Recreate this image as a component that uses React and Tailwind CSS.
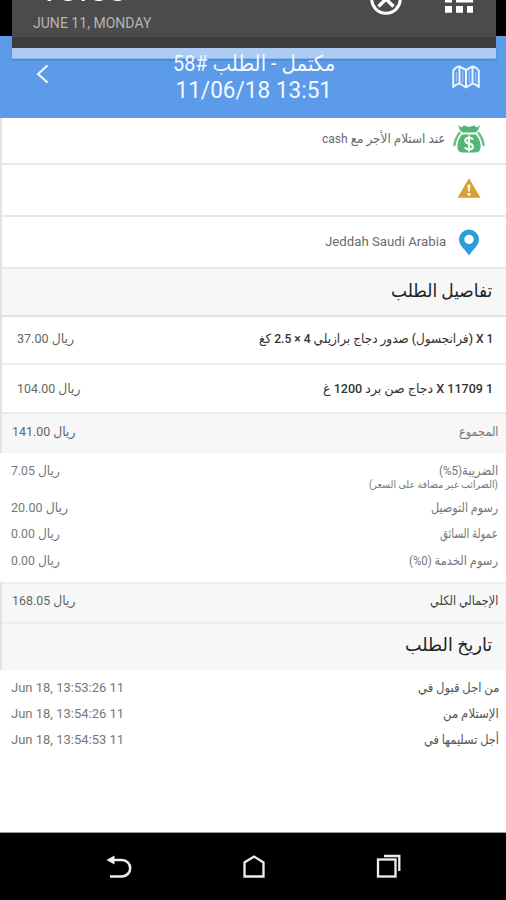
import { useLayoutEffect, useRef, useState } from 'react';

const FONT = "font-[Roboto,'DejaVu_Sans',sans-serif]";

// One line of text stretched or squeezed horizontally to a given width.
function Fit({ width, from = 'right', dir = 'rtl', className = '', children }) {
  const ref = useRef(null);
  const [scale, setScale] = useState(1);
  useLayoutEffect(() => {
    const measure = () => {
      if (ref.current && ref.current.offsetWidth) setScale(width / ref.current.offsetWidth);
    };
    measure();
    document.fonts?.ready.then(measure);
  }, [width]);
  const origin = from === 'right' ? 'origin-right' : from === 'left' ? 'origin-left' : 'origin-center';
  return (
    <span
      ref={ref}
      dir={dir}
      className={`inline-block whitespace-nowrap ${origin} ${className}`}
      style={{ transform: `scaleX(${scale})` }}
    >
      {children}
    </span>
  );
}

function MapIcon() {
  return (
    <svg width="28" height="24" viewBox="0 0 28 24" fill="none" stroke="#e8f4ff" strokeWidth="2" strokeLinejoin="round">
      <path d="M1.2 5.5 Q4.5 1.5 7.5 1.500 L14 5 L20.5 1.500 Q24 2 26.8 5.5 V22 Q24 19 20.5 18.500 L14 22.5 L7.5 18.500 Q4 19 1.2 22 Z" />
      <path d="M7.5 2 V19 M14 5 V22 M20.5 2 V19" />
      <path d="M4.3 7 V17 M10.8 6 V18 M17.3 6 V18 M23.7 7 V17" strokeWidth="1" opacity=".6" />
    </svg>
  );
}

function MoneyIcon() {
  return (
    <svg width="32" height="30" viewBox="0 0 32 30">
      <path d="M5 1 L8 3.5 L11 1.5 L16 3 L21 1.5 L24 3.5 L27 1 L25 6.5 L22.5 8.5 H9.5 L7 6.5 Z" fill="#55b478" />
      <path d="M9 10.5 H23 Q28.3 17 27.5 24 Q27 28.5 22 28.5 H10 Q5 28.5 4.5 24 Q3.700 17 9 10.500 Z" fill="#55b478" />
      <path d="M6.500 9 Q2 15 1.500 21" fill="none" stroke="#6dbd89" strokeWidth="2.500" strokeLinecap="round" />
      <path d="M25.500 9 Q30 15 30.500 21" fill="none" stroke="#6dbd89" strokeWidth="2.500" strokeLinecap="round" />
      <path d="M20 15.500 Q18.500 13.800 16 13.800 Q12.300 13.800 12.300 16.600 Q12.300 19 16 19.600 Q20 20.300 20 22.700 Q20 25.300 16 25.300 Q13.300 25.300 11.800 23.500 M16 11.500 V27.500" fill="none" stroke="#f0fff5" strokeWidth="2.100" />
    </svg>
  );
}

function WarnIcon() {
  return (
    <svg width="24" height="20" viewBox="0 0 24 20">
      <path d="M12 .3 L23.500 19.800 H.5 Z" fill="#d9a034" />
      <path d="M10.600 6.500 H13.400 L12.900 13.500 H11.100 Z" fill="#fffbe8" />
      <circle cx="12" cy="16.300" r="1.500" fill="#fffbe8" />
    </svg>
  );
}

function PinIcon() {
  return (
    <svg width="22" height="27" viewBox="0 0 22 27">
      <path fillRule="evenodd" d="M11 .5 A10 10 0 0 1 21 10.500 C21 16.500 14.500 21 11 26.500 C7.500 21 1 16.500 1 10.500 A10 10 0 0 1 11 .5 Z M11 5.700 A4.700 4.700 0 1 0 11 15.100 A4.700 4.700 0 1 0 11 5.700 Z" fill="#2c9cdb" />
    </svg>
  );
}

function InfoRow({ icon, className, children }) {
  return (
    <div dir="rtl" className={`flex items-center border-b-2 border-[#e9e9e9] pr-[21px] ${className}`}>
      <div className="flex w-8 justify-center">{icon}</div>
      <div className="mr-[7px] flex text-[13px] leading-4 text-[#6b6b6b]">{children}</div>
    </div>
  );
}

function Line({ label, labelWidth, value, valueWidth, className = '', labelClass = '', valueClass = 'text-[#777]' }) {
  return (
    <div dir="rtl" className={`flex items-center justify-between text-[13px] leading-4 ${className}`}>
      <Fit width={labelWidth} className={labelClass}>{label}</Fit>
      <Fit width={valueWidth} from="left" className={valueClass}>{value}</Fit>
    </div>
  );
}

export default function App() {
  return (
    <div className={`relative flex h-[900px] w-[506px] flex-col overflow-hidden bg-white ${FONT}`}>
      <div className="h-9 shrink-0 bg-black" />
      <header className="flex h-[82px] shrink-0 items-start justify-between bg-[#5b9be9] pt-[15px] pr-[26px] pl-[35px]">
        <svg className="mt-[13px]" width="15" height="21" viewBox="0 0 15 21" fill="none" stroke="#f4faff" strokeWidth="2">
          <path d="M12.500 1.500 L3 10 L12.500 18.500" />
        </svg>
        <div className="relative z-20 -mr-[6px] flex flex-col items-center text-[22px] leading-[26px] text-[#f2f8ff]">
          <Fit width={162} from="center">مكتمل - الطلب #58</Fit>
          <Fit width={157} from="center" dir="ltr" className="mt-px text-[23px]">11/06/18 13:51</Fit>
        </div>
        <div className="mt-[14px]"><MapIcon /></div>
      </header>

      <div className="flex shrink-0 flex-col border-l-2 border-[#e3e3e3]">
        <InfoRow className="h-[47px] pb-1" icon={<MoneyIcon />}>
          <Fit width={124}>عند استلام الأجر مع cash</Fit>
        </InfoRow>
        <InfoRow className="h-[52px] pb-1" icon={<WarnIcon />} />
        <InfoRow className="h-[52px]" icon={<PinIcon />}>
          <Fit width={121}>Jeddah Saudi Arabia</Fit>
        </InfoRow>
        <div dir="rtl" className="flex h-12 items-center border-b-2 border-[#e3e3e3] bg-[#f7f7f7] pr-3.5 pb-0.5 text-lg text-[#222]">
          <Fit width={101}>تفاصيل الطلب</Fit>
        </div>
        <Line className="h-12 border-b-2 border-[#ececec] pr-[13px] pb-0.5 pl-[15px]" label="1 X (فرانجسول) صدور دجاج برازيلي 4 × 2.5 كغ" labelWidth={234} value="ريال 37.00" valueWidth={57} labelClass="font-medium text-[#333]" valueClass="text-[#666]" />
        <Line className="h-[49px] border-b-2 border-[#ececec] pr-[13px] pl-[15px]" label="1 X 11709 دجاج صن برد 1200 غ" labelWidth={170} value="ريال 104.00" valueWidth={64} labelClass="font-medium text-[#333]" valueClass="text-[#666]" />
        <Line className="h-[39px] bg-[#f7f7f7] pr-2 pb-[3px] pl-2.5" label="المجموع" labelWidth={39} value="ريال 141.00" valueWidth={64} labelClass="text-[#777]" valueClass="text-[#666]" />
      </div>

      <div className="flex h-[129px] shrink-0 flex-col pt-2.5 pr-2 pl-[11px] text-[#777]">
        <Line className="h-4" label="الضريبة(5%)" labelWidth={59} value="ريال 7.05" valueWidth={49} />
        <div dir="rtl" className="flex h-3 items-center text-[10px] leading-3">
          <Fit width={129}>(الضرائب غير مضافة على السعر)</Fit>
        </div>
        <Line className="mt-[4px] h-[26px]" label="رسوم التوصيل" labelWidth={67} value="ريال 20.00" valueWidth={57} />
        <Line className="h-[26px]" label="عمولة السائق" labelWidth={58} value="ريال 0.00" valueWidth={49} />
        <Line className="h-[27px]" label="رسوم الخدمة (0%)" labelWidth={89} value="ريال 0.00" valueWidth={49} />
      </div>

      <div className="flex shrink-0 flex-col border-l-2 border-[#e3e3e3] bg-[#f7f7f7]">
        <Line className="h-[42px] border-y-2 border-[#eeeeee] pr-2 pb-1 pl-2.5" label="الإجمالي الكلي" labelWidth={68} value="ريال 168.05" valueWidth={64} labelClass="text-[#444]" valueClass="text-[#666]" />
        <div dir="rtl" className="flex h-[46px] items-center pr-3.5 pb-1 text-lg text-[#222]">
          <Fit width={87}>تاريخ الطلب</Fit>
        </div>
      </div>

      <div className="flex h-[163px] shrink-0 flex-col border-b border-[#999] pt-1 pr-[7px] pl-[11px]">
        <Line className="h-[27px]" label="من اجل قبول في" labelWidth={81} value="11 Jun 18, 13:53:26" valueWidth={113} labelClass="text-[#555]" />
        <Line className="h-[26px]" label="الإستلام من" labelWidth={56} value="11 Jun 18, 13:54:26" valueWidth={113} labelClass="text-[#555]" />
        <Line className="h-[26px]" label="أجل تسليمها في" labelWidth={75} value="11 Jun 18, 13:54:53" valueWidth={113} labelClass="text-[#555]" />
      </div>

      <nav className="flex grow items-start justify-between bg-black pt-[21px] pr-[105px] pl-[106px]">
        <svg width="26" height="25" viewBox="0 0 26 25">
          <path d="M7 6 H16 A8.200 8.200 0 0 1 16 22.400 H4" fill="none" stroke="#eee" strokeWidth="2.500" />
          <path d="M.5 6 L8.500 1.500 V10.500 Z" fill="#eee" />
        </svg>
        <svg width="22" height="25" viewBox="0 0 22 25" fill="none" stroke="#eee" strokeWidth="2.300">
          <path d="M1.500 22.500 V8.500 L11 2.500 L20.500 8.500 V22.500 Z" />
        </svg>
        <svg width="25" height="25" viewBox="0 0 25 25" fill="none" stroke="#eee" strokeWidth="2.300">
          <rect x="2" y="5.500" width="17.500" height="17" />
          <path d="M8 2 H23.300 V17" />
        </svg>
      </nav>

      <div className="absolute top-0 left-3 z-10 w-[484px]">
        <div className="relative h-12 overflow-hidden border-b-[11px] border-[#3d3d3d] bg-[#4b4b4b]">
          <div className="absolute -top-[30px] left-[26px] text-[35px] leading-[40px] text-white">
            <Fit width={90} from="left" dir="ltr">13:53</Fit>
          </div>
          <div className="absolute top-[14px] left-[21px] flex text-[15px] leading-[18px] text-[#b5b5b5]">
            <Fit width={118} from="left">JUNE 11, MONDAY</Fit>
          </div>
          <svg className="absolute -top-[18px] left-[357px]" width="34" height="34" viewBox="0 0 34 34" fill="none" stroke="#fff" strokeWidth="3">
            <circle cx="17" cy="17" r="14.300" />
            <path d="M9.500 9.500 L24.500 24.500 M24.500 9.500 L9.500 24.500" strokeWidth="3.500" />
          </svg>
          <svg className="absolute top-0 left-[433px]" width="28" height="13" viewBox="0 0 28 13" fill="#fff">
            <path d="M0 0 H7 V2.500 H0 Z M11 0 H28 V2.500 H11 Z M0 6 H7 V12.700 H0 Z M11 6 H18 V12.700 H11 Z M22 6 H28 V12.700 H22 Z" />
          </svg>
        </div>
        <div className="h-[11px] border-b border-[#8bb5ed] bg-[#acccf4] shadow-[0_1px_2px_#3f7fcf]" />
      </div>
    </div>
  );
}
